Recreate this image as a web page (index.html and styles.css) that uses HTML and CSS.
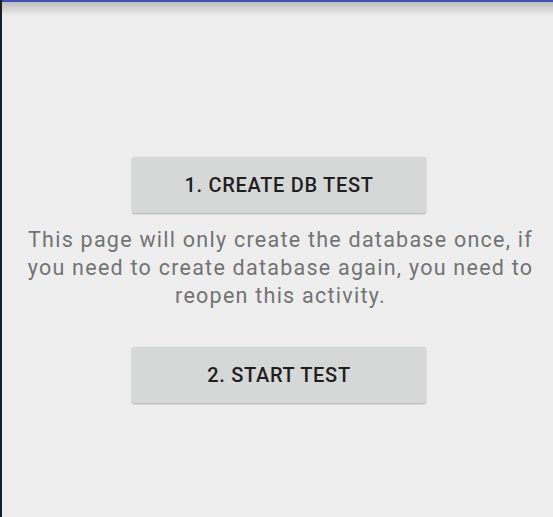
FILE: index.html
```html
<!DOCTYPE html>
<html>
<head>
<meta charset="utf-8">
<link rel="stylesheet" href="styles.css">
</head>
<body>
<div class="frame">
  <div class="topbar"></div>
  <div class="shade"></div>
  <main class="content">
    <button class="btn">1. CREATE DB TEST</button>
    <p class="note">This page will only create the database once, if you need to create database again, you need to reopen this activity.</p>
    <button class="btn btn-second">2. START TEST</button>
  </main>
</div>
</body>
</html>
```
FILE: styles.css
```css
html, body {
  margin: 0;
  padding: 0;
  background: #eeeeee;
}
.frame {
  width: 553px;
  height: 517px;
  box-sizing: border-box;
  border-left: 2px solid #1b2026;
  background: #eeeeee;
  position: relative;
  overflow: hidden;
}
.topbar {
  height: 2px;
  background: #3f51b5;
}
.shade {
  position: absolute;
  left: 0;
  right: 0;
  top: 2px;
  height: 14px;
  background: linear-gradient(to bottom, #bdbdbd, rgba(238,238,238,0));
}
.content {
  display: flex;
  flex-direction: column;
  align-items: center;
  padding-top: 155px;
}
.btn {
  width: 294px;
  height: 56px;
  border: none;
  border-radius: 2px;
  background: #d6d7d7;
  box-shadow: 0 1px 2px rgba(0,0,0,0.28);
  font-family: Roboto, "Noto Sans", sans-serif;
  font-weight: 500;
  font-size: 20px;
  letter-spacing: 0.7px;
  color: #1f1f1f;
  padding: 0;
  margin: 0 0 0 3px;
}
.note {
  margin: 13px 0 0 6px;
  padding: 0 12px;
  text-align: center;
  font-family: Roboto, "Noto Sans", sans-serif;
  font-size: 21.5px;
  letter-spacing: 1.25px;
  line-height: 28px;
  color: #737373;
}
.btn-second {
  margin-top: 37px;
}
```
